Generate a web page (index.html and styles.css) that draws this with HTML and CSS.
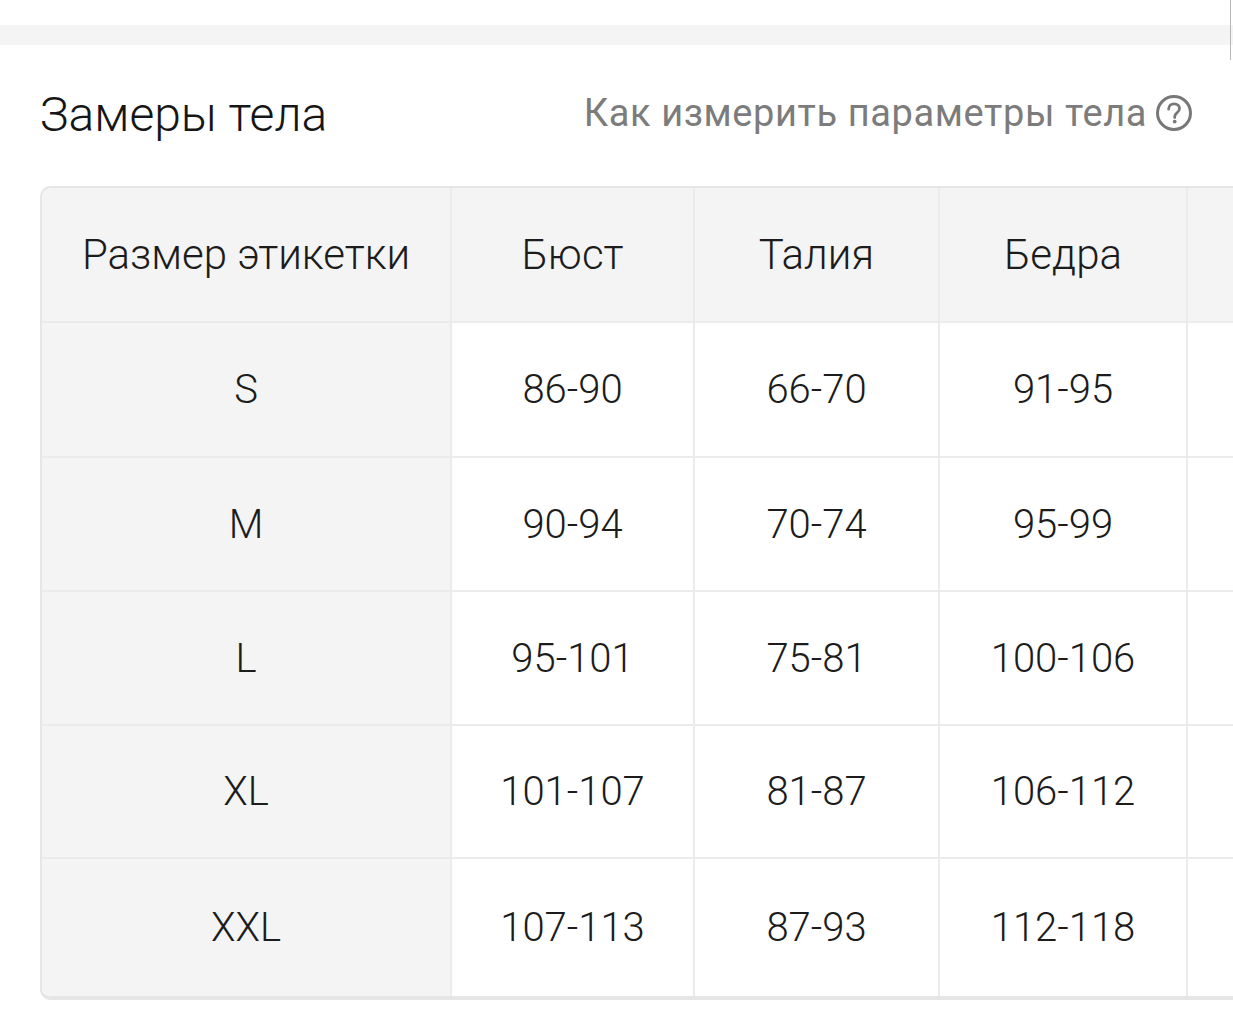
FILE: index.html
```html
<!DOCTYPE html>
<html lang="ru">
<head>
<meta charset="utf-8">
<link rel="stylesheet" href="styles.css">
</head>
<body>
<div class="page">
  <div class="band"></div>
  <div class="edge-line"></div>
  <header class="head">
    <h1 class="title">Замеры тела</h1>
    <a class="how">Как измерить параметры тела
      <svg class="qicon" viewBox="0 0 38 38" width="38" height="38" aria-hidden="true">
        <circle cx="19" cy="19" r="16.5" fill="none" stroke="#787878" stroke-width="3"/>
        <path d="M13.6 15.2c0-3.2 2.4-5.4 5.5-5.4 3.1 0 5.4 2 5.4 4.8 0 2.3-1.3 3.4-2.8 4.5-1.4 1-2 1.8-2 3.6v.9" fill="none" stroke="#787878" stroke-width="2.8" stroke-linecap="round"/>
        <circle cx="19.7" cy="27.6" r="1.9" fill="#787878"/>
      </svg>
    </a>
  </header>
  <div class="table-wrap">
    <div class="table">
      <div class="cell hd first">Размер этикетки</div>
      <div class="cell hd">Бюст</div>
      <div class="cell hd">Талия</div>
      <div class="cell hd">Бедра</div>
      <div class="cell hd last"></div>

      <div class="cell first">S</div>
      <div class="cell">86-90</div>
      <div class="cell">66-70</div>
      <div class="cell">91-95</div>
      <div class="cell last"></div>

      <div class="cell first">M</div>
      <div class="cell">90-94</div>
      <div class="cell">70-74</div>
      <div class="cell">95-99</div>
      <div class="cell last"></div>

      <div class="cell first">L</div>
      <div class="cell">95-101</div>
      <div class="cell">75-81</div>
      <div class="cell">100-106</div>
      <div class="cell last"></div>

      <div class="cell first">XL</div>
      <div class="cell">101-107</div>
      <div class="cell">81-87</div>
      <div class="cell">106-112</div>
      <div class="cell last"></div>

      <div class="cell first">XXL</div>
      <div class="cell">107-113</div>
      <div class="cell">87-93</div>
      <div class="cell">112-118</div>
      <div class="cell last"></div>
    </div>
  </div>
</div>
</body>
</html>
```
FILE: styles.css
```css
html, body {
  margin: 0;
  padding: 0;
  background: #ffffff;
  overflow: hidden;
}
body {
  width: 1233px;
  height: 1016px;
  font-family: Roboto, "Noto Sans", "Liberation Sans", sans-serif;
  color: #1c1c1c;
}
.page {
  position: relative;
  padding-top: 25px;
}
.band {
  height: 20px;
  background: #f4f4f4;
}
.edge-line {
  position: absolute;
  top: 0;
  right: 2px;
  width: 1px;
  height: 60px;
  background: #b8b8b8;
}
.head {
  display: flex;
  align-items: center;
  justify-content: space-between;
  padding: 42px 40px 0 40px;
  height: 98px;
  box-sizing: border-box;
}
.title {
  margin: 0;
  font-size: 48px;
  font-weight: 300;
  color: #161616;
  letter-spacing: 0;
  line-height: 56px;
}
.how {
  display: flex;
  align-items: center;
  gap: 8px;
  font-size: 38px;
  font-weight: 400;
  letter-spacing: 0.6px;
  color: #7c7c7c;
  line-height: 52px;
  margin-top: -4px;
}
.qicon {
  display: block;
}
.table-wrap {
  margin-top: 43px;
  margin-left: 40px;
  width: 1300px;
}
.table {
  display: grid;
  grid-template-columns: 410px 243px 245px 248px 200px;
  grid-template-rows: 135px 135px 134px 134px 133px 137px;
  border: 2px solid #e6e6e6;
  border-bottom-width: 4px;
  border-right: none;
  border-radius: 11px 0 0 11px;
  overflow: hidden;
  background: #ffffff;
}
.cell {
  display: flex;
  align-items: center;
  justify-content: center;
  font-size: 40px;
  font-weight: 300;
  color: #1c1c1c;
  border-right: 2px solid #ebebeb;
  border-bottom: 2px solid #ebebeb;
  box-sizing: border-box;
}
.cell:nth-last-child(-n+5) {
  border-bottom: none;
}
.cell.hd {
  background: #f4f4f4;
  font-size: 42px;
}
.cell.first {
  background: #f4f4f4;
}
.cell.last {
  border-right: none;
}
```
